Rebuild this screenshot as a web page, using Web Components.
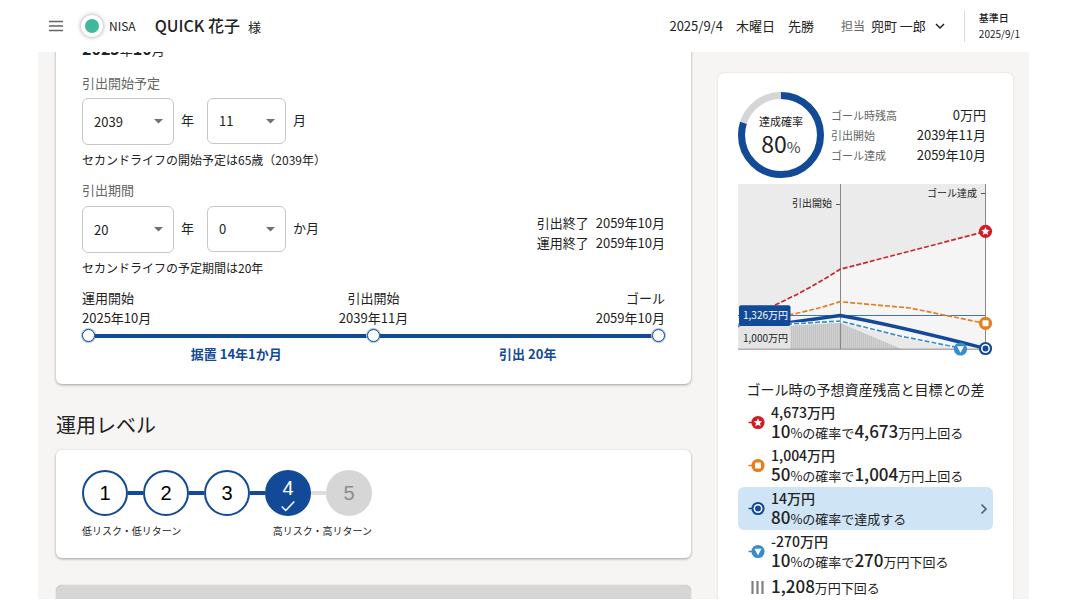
<!DOCTYPE html>
<html lang="ja">
<head>
<meta charset="utf-8">
<title>NISA ゴールプラン</title>
<style>
  html, body { margin: 0; height: 100%; }
  body {
    background: #fff;
    color: #222;
    font: 400 13px/20px "Noto Sans CJK JP", "Noto Sans", sans-serif;
    overflow: hidden;
  }
</style>
</head>
<body>
<plan-app></plan-app>

<script>
const define = (name, html, setup) => {
  const template = document.createElement('template');
  template.innerHTML = html;
  customElements.define(name, class extends HTMLElement {
    constructor() {
      super();
      this.attachShadow({ mode: 'open' }).append(template.content.cloneNode(true));
    }
    connectedCallback() {
      if (setup && !this.ready) { this.ready = true; setup(this, this.shadowRoot); }
    }
  });
};

/* Header bar */
define('app-header', `
<style>
  :host { display: flex; align-items: center; box-sizing: border-box; height: 52px; padding: 0 9px 0 10px; background: #fff; }
  button { border: 0; background: none; padding: 0; font: inherit; color: inherit; display: flex; align-items: center; }
  .dot { width: 14px; height: 14px; margin: 0 6px 0 17px; border: 4px solid #fff; border-radius: 50%; background: #3fb89c; box-shadow: 0 0 4px rgba(0,0,0,.4); }
  .brand { font-size: 12px; }
  h1 { margin: 0 0 0 19px; font-size: 16px; font-weight: 500; line-height: 24px; white-space: nowrap; }
  h1 small { font-size: 13px; font-weight: 400; margin-left: 8px; }
  .date { margin-left: auto; white-space: pre; }
  .staff { margin-left: 27px; white-space: nowrap; }
  .staff span { font-size: 12px; color: #666; margin-right: 6px; }
  .staff svg { margin-left: 9px; }
  dl { margin: 0 0 0 19px; padding-left: 14px; border-left: 1px solid #ddd; font-size: 10px; line-height: 16px; }
  dt { font-weight: 500; }
  dd { margin: 0; }
</style>
<button aria-label="メニュー"><svg width="16" height="12" viewBox="0 0 16 12" stroke="#666" stroke-width="1.4"><path d="M1 1.5h14M1 6h14M1 10.5h14"/></svg></button>
<i class="dot"></i><span class="brand">NISA</span>
<h1>QUICK 花子<small>様</small></h1>
<span class="date">2025/9/4　木曜日　先勝</span>
<button class="staff"><span>担当</span>兜町 一郎<svg width="10" height="8" viewBox="0 0 10 8" fill="none" stroke="#222" stroke-width="1.5"><path d="M1 2l4 4 4-4"/></svg></button>
<dl><dt>基準日</dt><dd>2025/9/1</dd></dl>
`);

/* White surface */
define('plan-card', `
<style>
  :host { display: block; box-sizing: border-box; background: #fff; border-radius: 6px; box-shadow: 0 1px 3px rgba(0,0,0,.36); }
  :host([flat]) { box-shadow: 0 0 2px rgba(0,0,0,.16); }
  :host([muted]) { background: #d6d6d6; box-shadow: 0 0 1px #888; }
</style><slot></slot>`);

/* Drop-down with its unit beside it */
define('unit-select', `
<style>
  :host { display: block; }
  label { display: flex; align-items: center; gap: 7px; }
  .box { display: grid; align-items: center; }
  .unit { padding-bottom: 3px; }
  select, svg { grid-area: 1 / 1; }
  select { appearance: none; box-sizing: border-box; width: 92px; height: 47px; padding: 0 11px; border: 1px solid #c6c6c6; border-radius: 6px; background: #fff; font: inherit; color: inherit; }
  svg { justify-self: end; margin-right: 11px; pointer-events: none; }
  :host([narrow]) select { width: 79px; height: 46px; }
</style>
<label><span class="box"><select></select><svg width="9" height="5" viewBox="0 0 9 5"><path d="M0 0h9L4.500 4.500z" fill="#707070"/></svg></span><span class="unit"></span></label>
`, (host, root) => {
  root.querySelector('select').add(new Option(host.getAttribute('value')));
  root.querySelector('.unit').textContent = host.getAttribute('unit');
});

/* Withdrawal schedule */
define('schedule-form', `
<style>
  :host { display: block; padding: 10px 26px 19px; }
  .current { font-size: 13px; line-height: 20px; }
  .current b { font-size: 16px; line-height: 16px; }
  h3 { margin: 13px 0 5px; font-size: 13px; font-weight: 400; color: #666; line-height: 20px; }
  .row { display: flex; gap: 13px; }
  .ends { display: grid; grid-template-columns: auto auto; column-gap: 7px; margin: 0 0 0 auto; align-self: end; }
  .ends dd, p { margin: 0; }
  p { margin: 5px 0 10px; font-size: 12px; }
  h3.second { margin: 0 0 6px; }
</style>
<div class="current"><b>2025</b>年<b>10</b>月</div>
<h3>引出開始予定</h3>
<div class="row"><unit-select value="2039" unit="年"></unit-select><unit-select narrow value="11" unit="月"></unit-select></div>
<p>セカンドライフの開始予定は65歳（2039年）</p>
<h3 class="second">引出期間</h3>
<div class="row"><unit-select value="20" unit="年"></unit-select><unit-select narrow value="0" unit="か月"></unit-select>
<dl class="ends"><dt>引出終了</dt><dd>2059年10月</dd><dt>運用終了</dt><dd>2059年10月</dd></dl></div>
<p>セカンドライフの予定期間は20年</p>
<plan-timeline></plan-timeline>
`);

define('plan-timeline', `
<style>
  :host { display: block; }
  .points { display: grid; grid-template-columns: 1fr 1fr 1fr; }
  .points :nth-child(2) { text-align: center; }
  .points :nth-child(3) { text-align: right; }
  .track { display: flex; align-items: center; margin: 1px 0; }
  .track i { box-sizing: border-box; width: 13px; height: 13px; border: 1px solid #134a97; box-shadow: 0 0 0 1px #a9c2e4; border-radius: 50%; background: #fff; }
  .track b { flex: 1; height: 4px; background: #134a97; }
  .spans { display: grid; grid-template-columns: 1fr 1fr; text-align: center; color: #134a97; font-weight: 700; line-height: 22px; }
  .spans span { padding-left: 17px; }
</style>
<div class="points"><span>運用開始<br>2025年10月</span><span>引出開始<br>2039年11月</span><span>ゴール<br>2059年10月</span></div>
<div class="track"><i></i><b></b><i></i><b></b><i></i></div>
<div class="spans"><span>据置 14年1か月</span><span>引出 20年</span></div>
`);

/* Risk level steps */
define('risk-level', `
<style>
  :host { display: block; padding: 20px 26px 17px; }
  .inner { width: fit-content; }
  .steps { display: flex; align-items: center; }
  button { display: flex; flex-direction: column; align-items: center; justify-content: center; box-sizing: border-box; width: 46px; height: 46px; padding: 0; border: 2px solid #134a97; border-radius: 50%; background: #fff; color: #000; font: 20px/20px "Liberation Sans", sans-serif; }
  button[aria-pressed] { justify-content: end; background: #134a97; color: #fff; }
  button:disabled { background: #d6d6d6; border-color: #d6d6d6; color: #8c8c8c; }
  button svg { margin: 2px 0; }
  i { width: 15px; height: 4px; background: #134a97; }
  i.off { background: #dcdcdc; }
  .ends { display: flex; justify-content: space-between; margin-top: 5px; font-size: 10px; line-height: 20px; }
</style>
<div class="inner">
<div class="steps"><button>1</button><i></i><button>2</button><i></i><button>3</button><i></i><button aria-pressed="true">4<svg width="14" height="12" viewBox="0 0 14 12" fill="none" stroke="#fff" stroke-width="1.500"><path d="M.7 6.500l4 4L13.300 1.500"/></svg></button><i class="off"></i><button disabled>5</button></div>
<div class="ends"><span>低リスク・低リターン</span><span>高リスク・高リターン</span></div>
</div>
`);

/* Goal probability ring and its figures */
define('goal-summary', `
<style>
  :host { display: flex; align-items: center; gap: 7px; }
  .ring { display: grid; place-items: center; flex: none; }
  .ring > * { grid-area: 1 / 1; }
  .ring div { text-align: center; font-size: 11px; line-height: 20px; }
  .ring strong { display: block; font-weight: 400; font-size: 23px; line-height: 24px; }
  .ring small { font-size: 15px; color: #444; }
  dl { flex: 1; display: grid; grid-template-columns: auto auto; justify-content: space-between; margin: 0; padding: 0 7px 0 0; }
  dt { font-size: 11px; color: #666; }
  dd { margin: 0; text-align: right; }
</style>
<div class="ring"><svg width="86" height="86" viewBox="0 0 86 86" fill="none" stroke-width="7"><circle cx="43" cy="43" r="39.500" stroke="#d6d6d6"/><circle cx="43" cy="43" r="39.500" stroke="#134a97" pathLength="100" stroke-dasharray="80 20" transform="rotate(-90 43 43)"/></svg>
<div>達成確率<strong>80<small>%</small></strong></div></div>
<dl><dt>ゴール時残高</dt><dd>0万円</dd><dt>引出開始</dt><dd>2039年11月</dd><dt>ゴール達成</dt><dd>2059年10月</dd></dl>
`);

const marks = {
  star: ['#d41a24', '<path d="M0-4.200l1.200 2.700 3 .3-2.200 2 .7 2.900L0 2.200l-2.700 1.500.7-2.900-2.200-2 3-.3z" fill="#fff"/>'],
  square: ['#e47f1d', '<rect x="-3" y="-3" width="6" height="6" rx="1" fill="#fff"/>'],
  target: ['#134a97', '<circle r="3.700" fill="none" stroke="#fff" stroke-width="1.500"/>'],
  down: ['#3a8ccb', '<path d="M-3.500-2.700h7L0 3.700z" fill="#fff"/>']
};
const mark = (name, x, y, tail = '') =>
  `<g transform="translate(${x} ${y})">${tail && `<path d="M-9.500 0h5" stroke="${marks[name][0]}" stroke-width="1.500"/>`}<circle r="6.600" fill="${marks[name][0]}"/>${marks[name][1]}</g>`;

/* Thin bars of the remaining principal, one every two units */
let bars = '';
for (let x = 53.5; x < 163; x += 2) {
  const top = x < 102 ? 139 + (102 - x) * .05 : 139 + (x - 102) * .42;
  bars += `M${x} 165V${top.toFixed(1)}`;
}

define('forecast-chart', `
<style>
  :host { display: block; }
  svg { display: block; width: 100%; height: auto; }
  text { font-size: 10px; fill: #222; }
</style>
<svg viewBox="0 0 255 172" fill="none">
  <path d="M0 0h247.500v165H0z" fill="#f5f5f5"/>
  <path d="M0 0h247.500v47L102 85 70 104 37 121 0 136z" fill="#ebebeb"/>
  <path d="M0 141l52-1.500 50-2.500 120 27v1H0z" fill="#e9e9e9"/>
  <path d="M52 142l50-3 61 26H52z" fill="#d0d0d0"/>
  <path d="${bars}" stroke="#c4c4c4"/>
  <path d="M102.500 0v165M247.500 0v165M0 165.200h247.500" stroke="#888"/>
  <path d="M98 20.500h4M243 9.500h4" stroke="#555"/>
  <path d="M0 131.500h247.500" stroke="#4470b8"/>
  <path d="M37 121q33-15 65-35.700L247.500 47.500" stroke="#c9262e" stroke-width="1.700" stroke-dasharray="5 2"/>
  <path d="M37 133q30-4 65-15.300l70 6.300 75.500 15.500" stroke="#e47f1d" stroke-width="1.700" stroke-dasharray="5 2"/>
  <path d="M0 141.500l52-3 50-7q50 8.500 145.500 33" stroke="#134a97" stroke-width="3.300"/>
  <path d="M0 141l52-1 50-3 60 15 60 12" stroke="#fff" stroke-width="2.500"/>
  <path d="M0 141l52-1 50-3 60 15 60 12" stroke="#3a8ccb" stroke-width="1.700" stroke-dasharray="5 2"/>
  <rect x="1" y="142" width="51.500" height="22" rx="2" fill="#e4e4e4"/>
  <rect x="1" y="121.300" width="51.500" height="20.700" rx="2" fill="#134a97"/>
  <text x="5" y="135" style="fill:#fff">1,326万円</text>
  <text x="5" y="158">1,000万円</text>
  <text x="94" y="23" text-anchor="end">引出開始</text>
  <text x="239" y="13" text-anchor="end">ゴール達成</text>
  ${mark('down', 222.5, 165)}${mark('star', 247.5, 47.3)}${mark('square', 247.5, 139.3)}${mark('target', 247.5, 164.5)}
</svg>
`);

/* One outcome line: marker, amount, explanation */
define('outcome-row', `
<style>
  :host { display: block; }
  .row { display: flex; align-items: center; box-sizing: border-box; width: 100%; min-height: 43px; padding: 0 4px 0 10px; border: 0; border-radius: 6px; background: none; font: inherit; color: inherit; text-align: left; line-height: 19px; }
  button.row { background: #cfe5f6; }
  .mark { flex: none; width: 18px; margin-right: 5px; }
  .arrow { margin-left: auto; }
  :host([single]) .row { min-height: 28px; }
</style>
<slot></slot>
`, (host, root) => {
  const name = host.getAttribute('mark');
  const tag = host.hasAttribute('selected') ? 'button' : 'div';
  const row = document.createElement(tag);
  row.className = 'row';
  const icon = name === 'bars'
    ? '<path d="M4.500 1v13M9.500 1v13M14.500 1v13" stroke="#808080" stroke-width="2.200"/>'
    : mark(name, 10, 7.5, 'tail');
  row.innerHTML = `<svg class="mark" width="18" height="15" viewBox="0 0 18 15">${icon}</svg>`;
  row.append(root.querySelector('slot'));
  if (tag === 'button') row.insertAdjacentHTML('beforeend', '<svg class="arrow" width="10" height="12" viewBox="0 0 10 12" fill="none" stroke="#56606a" stroke-width="1.700"><path d="M2.500 1.500L7 6l-4.500 4.500"/></svg>');
  root.append(row);
});

define('outcome-list', `
<style>
  :host { display: block; }
  h2 { margin: 0 0 2px; text-align: center; font-size: 14px; line-height: 20px; font-weight: 400; white-space: nowrap; }
  strong { display: block; font-size: 14px; font-weight: 500; }
  span { display: block; white-space: nowrap; }
  b { font-size: 17px; font-weight: 500; line-height: 17px; }
</style>
<h2>ゴール時の予想資産残高と目標との差</h2>
<outcome-row mark="star"><span><strong>4,673万円</strong><b>10</b>%の確率で<b>4,673</b>万円上回る</span></outcome-row>
<outcome-row mark="square"><span><strong>1,004万円</strong><b>50</b>%の確率で<b>1,004</b>万円上回る</span></outcome-row>
<outcome-row mark="target" selected><span><strong>14万円</strong><b>80</b>%の確率で達成する</span></outcome-row>
<outcome-row mark="down"><span><strong>-270万円</strong><b>10</b>%の確率で<b>270</b>万円下回る</span></outcome-row>
<outcome-row mark="bars" single><span><b>1,208</b>万円下回る</span></outcome-row>
`);

define('plan-app', `
<style>
  :host { display: flex; flex-direction: column; box-sizing: border-box; height: 100vh; padding: 0 39px 1px 38px; }
  app-header { flex: none; }
  main { flex: 1; min-height: 0; overflow: hidden; display: grid; grid-template-columns: minmax(0, 1fr) 295px; align-items: start; gap: 27px; padding: 0 16px 0 18px; background: #f6f5f4; }
  .content { margin-top: -22px; }
  h2 { margin: 26px 0 10px; font-size: 20px; font-weight: 400; line-height: 30px; }
  .next { margin-top: 27px; height: 60px; }
  aside { margin-top: 21px; }
  .goal { padding: 19px 20px; }
  forecast-chart { margin: 6px 0 23px; }
</style>
<app-header></app-header>
<main>
  <div class="content">
    <plan-card><schedule-form></schedule-form></plan-card>
    <h2>運用レベル</h2>
    <plan-card><risk-level></risk-level></plan-card>
    <plan-card muted class="next"></plan-card>
  </div>
  <aside><plan-card flat class="goal"><goal-summary></goal-summary><forecast-chart></forecast-chart><outcome-list></outcome-list></plan-card></aside>
</main>
`);
</script>
</body>
</html>
